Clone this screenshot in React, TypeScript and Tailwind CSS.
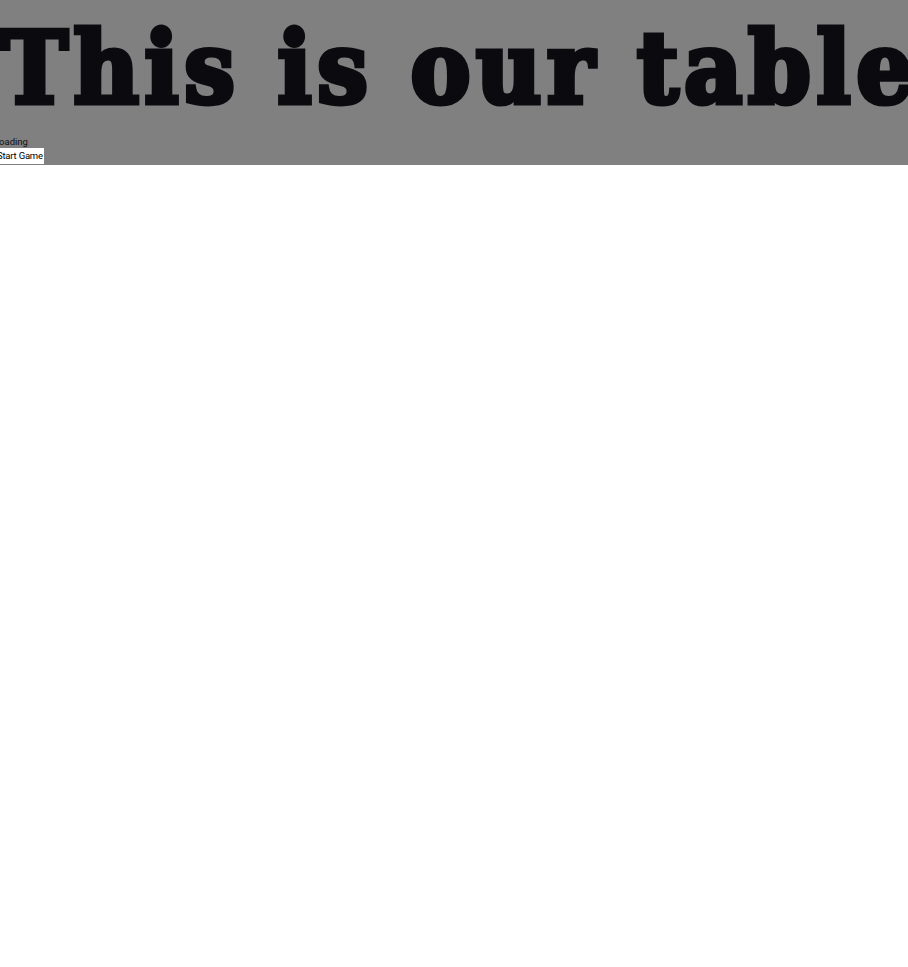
export default function App() {
  return (
    <div className="w-full min-h-screen bg-white overflow-hidden">
      <header className="bg-[#808080] h-[165px] overflow-hidden">
        <div className="-ml-[6px] flex flex-col items-start">
          <h1 className="pl-[7px] font-['DejaVu_Serif_Condensed','DejaVu_Serif',serif] font-black text-[100px] leading-[136px] text-[#0b0a0f] whitespace-nowrap tracking-[5.6px] [-webkit-text-stroke:5px_#0b0a0f]">
            This is our table
          </h1>
          <div className="font-['Roboto',sans-serif] text-[9.5px] leading-[12px] text-[#111]">Loading</div>
          <button className="block font-['Roboto',sans-serif] text-[9.5px] leading-[16px] tracking-[-0.2px] bg-white text-black pl-[3px] pr-[1px] h-[16px]">
            Start Game
          </button>
        </div>
      </header>
    </div>
  );
}
